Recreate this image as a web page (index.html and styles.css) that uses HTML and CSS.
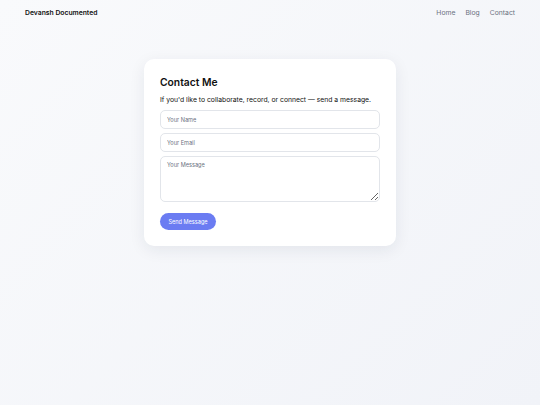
FILE: index.html
```html
<!DOCTYPE html>
<html lang="en">
<head>
    <meta charset="UTF-8">
    <meta name="viewport" content="width=device-width, initial-scale=1.0">
    <title>Contact - Devansh Documented</title>
    <link rel="stylesheet" href="styles.css">
</head>
<body>
    <div class="header">
        <div class="logo">Devansh Documented</div>
        <div class="nav">
            <a href="#">Home</a>
            <a href="#">Blog</a>
            <a href="#">Contact</a>
        </div>
    </div>
    <div class="container">
        <div class="card">
            <h1>Contact Me</h1>
            <p>If you'd like to collaborate, record, or connect — send a message.</p>
            <form class="contact-form">
                <input type="text" placeholder="Your Name">
                <input type="email" placeholder="Your Email">
                <textarea placeholder="Your Message"></textarea>
                <button type="button">Send Message</button>
            </form>
        </div>
    </div>
</body>
</html>
```

FILE: styles.css
```css
body {
    margin: 0;
    padding: 0;
    font-family: Inter, "Noto Sans", sans-serif;
    background: linear-gradient(135deg, #f9fafc 0%, #f1f3f8 100%);
    min-height: 405px;
    color: #111;
}
.header {
    display: flex;
    justify-content: space-between;
    align-items: center;
    padding: 6px 25px 0 25px;
    height: 12px;
}
.logo {
    font-size: 6.8px;
    font-weight: 600;
    color: #111;
}
.nav {
    display: flex;
    gap: 10px;
}
.nav a {
    font-size: 6.8px;
    color: #6b7280;
    text-decoration: none;
}
.container {
    display: flex;
    justify-content: center;
    padding-top: 41px;
}
.card {
    width: 220px;
    background: #fff;
    border-radius: 10px;
    padding: 16px;
    box-shadow: 0 4px 16px rgba(30, 40, 70, 0.08);
}
.card h1 {
    margin: 0;
    font-size: 10.3px;
    font-weight: 600;
    line-height: 14px;
}
.card p {
    margin: 6px 0 5px 0;
    font-size: 6.8px;
    line-height: 10px;
}
.contact-form {
    display: flex;
    flex-direction: column;
    gap: 4px;
    align-items: flex-start;
}
.contact-form input,
.contact-form textarea {
    box-sizing: border-box;
    width: 100%;
    border: 1px solid #e2e5ea;
    border-radius: 5px;
    padding: 5px 6px;
    font-family: Inter, "Noto Sans", sans-serif;
    font-size: 5.6px;
    background: #fff;
}
.contact-form input {
    height: 19px;
}
.contact-form textarea {
    height: 46px;
    resize: vertical;
}
.contact-form input::placeholder,
.contact-form textarea::placeholder {
    color: #6b7280;
}
.contact-form button {
    margin-top: 7px;
    background: #6b7cf2;
    color: #fff;
    border: none;
    border-radius: 9px;
    height: 17px;
    width: 56px;
    padding: 0;
    font-family: Inter, "Noto Sans", sans-serif;
    font-size: 5.6px;
    cursor: pointer;
}
```
